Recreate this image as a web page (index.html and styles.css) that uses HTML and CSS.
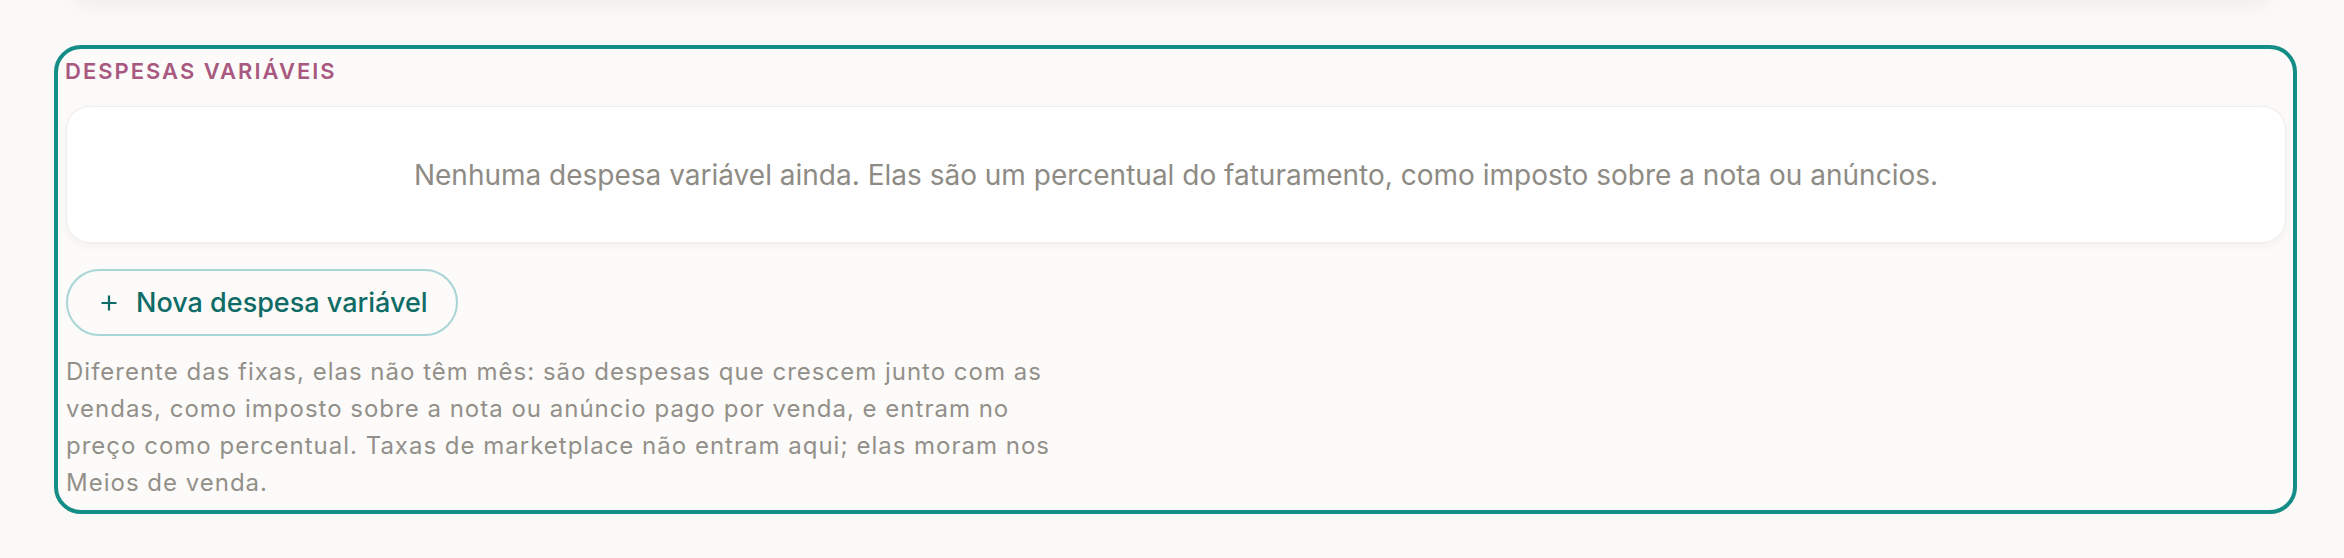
FILE: index.html
```html
<!DOCTYPE html>
<html lang="pt-BR">
<head>
<meta charset="utf-8">
<title>Despesas variáveis</title>
<link rel="stylesheet" href="styles.css">
</head>
<body>
<div class="page">
  <div class="prev-card"></div>
  <section class="group">
    <h2 class="group-title">Despesas variáveis</h2>
    <div class="empty-card">
      <p class="empty-text">Nenhuma despesa variável ainda. Elas são um percentual do faturamento, como imposto sobre a nota ou anúncios.</p>
    </div>
    <button class="add-btn" type="button">
      <svg class="add-icon" viewBox="0 0 18 18" width="18" height="18" aria-hidden="true"><path d="M9 1.5v15M1.5 9h15" stroke="currentColor" stroke-width="2.2" fill="none" stroke-linecap="butt"/></svg>
      <span>Nova despesa variável</span>
    </button>
    <p class="note">Diferente das fixas, elas não têm mês: são despesas que crescem junto com as vendas, como imposto sobre a nota ou anúncio pago por venda, e entram no preço como percentual. Taxas de marketplace não entram aqui; elas moram nos Meios de venda.</p>
  </section>
</div>
</body>
</html>
```

FILE: styles.css
```css
* { box-sizing: border-box; }

html, body {
  margin: 0;
  padding: 0;
  background: #faf9f7;
  font-family: Inter, "Noto Sans", "Liberation Sans", sans-serif;
}

.page {
  padding: 0 47px 0 54px;
  overflow: hidden;
  height: 558px;
}

.prev-card {
  height: 40px;
  margin: -42px 24px 0 17px;
  background: #ffffff;
  border-radius: 24px;
  box-shadow: 0 6px 22px rgba(40, 30, 20, 0.06);
}

.group {
  margin-top: 47px;
  border: 4px solid #138d86;
  border-radius: 27px;
  padding: 7px 7px 9px 8px;
  background: #fcfbf9;
}

.group-title {
  margin: 0 0 20px -1px;
  font-size: 22px;
  line-height: 30px;
  font-weight: 600;
  letter-spacing: 2px;
  text-transform: uppercase;
  color: #a9587f;
}

.empty-card {
  height: 137px;
  display: flex;
  align-items: center;
  justify-content: center;
  background: #ffffff;
  border: 1px solid #f0eeeb;
  border-radius: 24px;
  box-shadow: 0 3px 10px rgba(40, 30, 20, 0.05);
}

.empty-text {
  margin: 0;
  font-size: 28px;
  line-height: 40px;
  color: #8e8b85;
  text-align: center;
}

.add-btn {
  margin-top: 26px;
  height: 67px;
  display: inline-flex;
  align-items: center;
  gap: 18px;
  padding: 0 28px 0 32px;
  border: 2px solid #a8d5d5;
  border-radius: 999px;
  background: #fcfbf9;
  color: #0e6b66;
  font-family: inherit;
  font-size: 27px;
  font-weight: 500;
  line-height: 1;
}

.add-icon { display: block; }

.note {
  margin: 17px 0 0 0;
  max-width: 990px;
  font-size: 24px;
  line-height: 37px;
  letter-spacing: 1px;
  color: #93908a;
}
```
